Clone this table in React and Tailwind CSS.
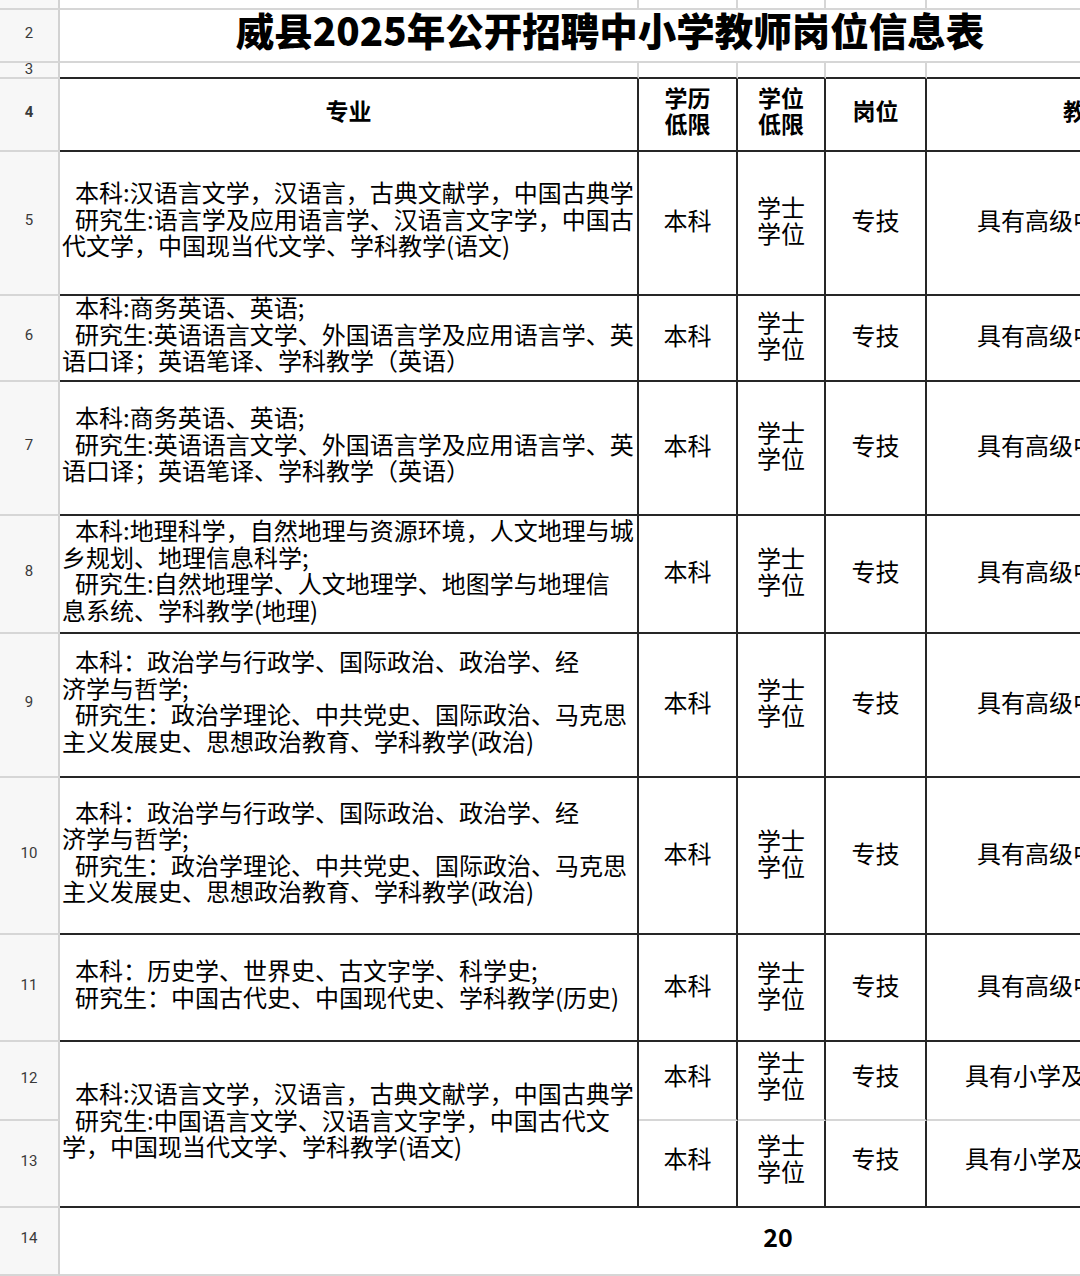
const BLACK_B = "border-b-2 border-b-[#262626]";
const GRAY_B = "border-b-2 border-b-[#d6d6d6]";

const HighTeach = "具有高级中学教师资格证";
const PrimaryTeach = "具有小学及以上教师资格证";

const rows = [
  {
    n: 5,
    h: "h-[144px]",
    lines: [
      ["本科:汉语言文学，汉语言，古典文献学，中国古典学；", true],
      ["研究生:语言学及应用语言学、汉语言文字学，中国古", true],
      ["代文学，中国现当代文学、学科教学(语文)", false],
    ],
  },
  {
    n: 6,
    h: "h-[86px]",
    lines: [
      ["本科:商务英语、英语;", true],
      ["研究生:英语语言文学、外国语言学及应用语言学、英", true],
      ["语口译；英语笔译、学科教学（英语）", false],
    ],
  },
  {
    n: 7,
    h: "h-[134px]",
    lines: [
      ["本科:商务英语、英语;", true],
      ["研究生:英语语言文学、外国语言学及应用语言学、英", true],
      ["语口译；英语笔译、学科教学（英语）", false],
    ],
  },
  {
    n: 8,
    h: "h-[118px]",
    lines: [
      ["本科:地理科学，自然地理与资源环境，人文地理与城", true],
      ["乡规划、地理信息科学;", false],
      ["研究生:自然地理学、人文地理学、地图学与地理信", true],
      ["息系统、学科教学(地理)", false],
    ],
  },
  {
    n: 9,
    h: "h-[144px]",
    lines: [
      ["本科：政治学与行政学、国际政治、政治学、经", true],
      ["济学与哲学;", false],
      ["研究生：政治学理论、中共党史、国际政治、马克思", true],
      ["主义发展史、思想政治教育、学科教学(政治)", false],
    ],
  },
  {
    n: 10,
    h: "h-[157px]",
    lines: [
      ["本科：政治学与行政学、国际政治、政治学、经", true],
      ["济学与哲学;", false],
      ["研究生：政治学理论、中共党史、国际政治、马克思", true],
      ["主义发展史、思想政治教育、学科教学(政治)", false],
    ],
  },
  {
    n: 11,
    h: "h-[107px]",
    lines: [
      ["本科：历史学、世界史、古文字学、科学史;", true],
      ["研究生：中国古代史、中国现代史、学科教学(历史)", true],
    ],
  },
];

const mergedLines = [
  ["本科:汉语言文学，汉语言，古典文献学，中国古典学；", true],
  ["研究生:中国语言文学、汉语言文字学，中国古代文", true],
  ["学，中国现当代文学、学科教学(语文)", false],
];

function RowHead({ n, bottom = GRAY_B }) {
  return (
    <div
      className={`w-[60px] shrink-0 bg-[#f7f7f7] border-r-2 border-r-[#d2d2d2] ${bottom} flex items-center justify-center pb-[5px] text-[15px] text-[#3a3a3a] font-['Roboto',sans-serif]`}
    >
      {n}
    </div>
  );
}

function Major({ lines, bottom = BLACK_B }) {
  return (
    <div
      className={`w-[579px] shrink-0 border-r-2 border-r-[#262626] ${bottom} flex flex-col justify-center overflow-hidden pb-[8px] text-[24px] leading-[26.5px]`}
    >
      {lines.map(([text, indent], i) => (
        <div
          key={i}
          className={`whitespace-nowrap ${indent ? "pl-[15px]" : "pl-[2px]"}`}
        >
          {text}
        </div>
      ))}
    </div>
  );
}

function Tail({ teach, bottom = BLACK_B, shift = "pb-[6px]" }) {
  return (
    <>
      <div
        className={`w-[99px] shrink-0 border-r-2 border-r-[#262626] ${bottom} flex items-center justify-center ${shift}`}
      >
        本科
      </div>
      <div
        className={`w-[88px] shrink-0 border-r-2 border-r-[#262626] ${bottom} flex flex-col items-center justify-center ${shift} leading-[26px]`}
      >
        <span>学士</span>
        <span>学位</span>
      </div>
      <div
        className={`w-[101px] shrink-0 border-r-2 border-r-[#262626] ${bottom} flex items-center justify-center ${shift}`}
      >
        专技
      </div>
      <div
        className={`w-[366px] shrink-0 border-r-2 border-r-[#262626] ${bottom} flex items-center justify-center ${shift} whitespace-nowrap`}
      >
        {teach}
      </div>
    </>
  );
}

export default function App() {
  return (
    <div className="w-[1080px] h-[1276px] overflow-hidden bg-white text-black text-[24px] font-['Noto_Sans_CJK_SC','Noto_Sans',sans-serif]">
      <div className="w-[1300px] flex flex-col">
        {/* row 1 (scrolled, partly visible) */}
        <div className="flex h-[10px]">
          <RowHead n="" />
          <div className={`w-[579px] shrink-0 border-r-2 border-r-[#d6d6d6] ${GRAY_B}`} />
          <div className={`w-[99px] shrink-0 border-r-2 border-r-[#d6d6d6] ${GRAY_B}`} />
          <div className={`w-[88px] shrink-0 border-r-2 border-r-[#d6d6d6] ${GRAY_B}`} />
          <div className={`w-[101px] shrink-0 border-r-2 border-r-[#d6d6d6] ${GRAY_B}`} />
          <div className={`w-[366px] shrink-0 ${GRAY_B}`} />
        </div>

        {/* row 2: title */}
        <div className="flex h-[53px]">
          <RowHead n="2" />
          <div
            className={`w-[1100px] shrink-0 ${GRAY_B} flex items-center justify-center pb-[12px] text-[38.5px] font-black whitespace-nowrap`}
          >
            威县2025年公开招聘中小学教师岗位信息表
          </div>
        </div>

        {/* row 3 */}
        <div className="flex h-[16px]">
          <div
            className={`w-[60px] shrink-0 bg-[#f7f7f7] border-r-2 border-r-[#d2d2d2] ${GRAY_B} flex items-start justify-center text-[15px] leading-[12px] text-[#3a3a3a] font-['Roboto',sans-serif]`}
          >
            3
          </div>
          <div className={`w-[579px] shrink-0 border-r-2 border-r-[#d6d6d6] ${BLACK_B}`} />
          <div className={`w-[99px] shrink-0 border-r-2 border-r-[#d6d6d6] ${BLACK_B}`} />
          <div className={`w-[88px] shrink-0 border-r-2 border-r-[#d6d6d6] ${BLACK_B}`} />
          <div className={`w-[101px] shrink-0 border-r-2 border-r-[#d6d6d6] ${BLACK_B}`} />
          <div className={`w-[366px] shrink-0 ${BLACK_B}`} />
        </div>

        {/* row 4: header */}
        <div className="flex h-[73px] font-bold text-[23px]">
          <RowHead n="4" />
          <div
            className={`w-[579px] shrink-0 border-r-2 border-r-[#262626] ${BLACK_B} flex items-center justify-center pb-[9px]`}
          >
            专业
          </div>
          <div
            className={`w-[99px] shrink-0 border-r-2 border-r-[#262626] ${BLACK_B} flex flex-col items-center justify-center pb-[9px] leading-[26px]`}
          >
            <span>学历</span>
            <span>低限</span>
          </div>
          <div
            className={`w-[88px] shrink-0 border-r-2 border-r-[#262626] ${BLACK_B} flex flex-col items-center justify-center pb-[9px] leading-[26px]`}
          >
            <span>学位</span>
            <span>低限</span>
          </div>
          <div
            className={`w-[101px] shrink-0 border-r-2 border-r-[#262626] ${BLACK_B} flex items-center justify-center pb-[9px]`}
          >
            岗位
          </div>
          <div
            className={`w-[366px] shrink-0 border-r-2 border-r-[#262626] ${BLACK_B} flex items-center justify-center pb-[9px]`}
          >
            教师资格
          </div>
        </div>

        {/* rows 5-11 */}
        {rows.map((r) => (
          <div key={r.n} className={`flex ${r.h}`}>
            <RowHead n={r.n} />
            <Major lines={r.lines} />
            <Tail teach={HighTeach} />
          </div>
        ))}

        {/* rows 12-13 with merged major cell */}
        <div className="flex h-[166px]">
          <div className="w-[60px] shrink-0 flex flex-col">
            <div className="h-[79px] flex">
              <RowHead n="12" />
            </div>
            <div className="h-[87px] flex">
              <RowHead n="13" />
            </div>
          </div>
          <Major lines={mergedLines} />
          <div className="flex flex-col">
            <div className="flex h-[79px]">
              <Tail teach={PrimaryTeach} bottom={GRAY_B} shift="pb-[12px]" />
            </div>
            <div className="flex h-[87px]">
              <Tail teach={PrimaryTeach} shift="pb-[12px]" />
            </div>
          </div>
        </div>

        {/* row 14: total */}
        <div className="flex h-[68px]">
          <RowHead n="14" />
          <div className={`w-[579px] shrink-0 ${GRAY_B}`} />
          <div className={`w-[99px] shrink-0 ${GRAY_B}`} />
          <div
            className={`w-[88px] shrink-0 ${GRAY_B} flex items-center justify-center pb-[9px] pr-[8px] font-bold text-[25px]`}
          >
            20
          </div>
          <div className={`w-[101px] shrink-0 ${GRAY_B}`} />
          <div className={`w-[366px] shrink-0 ${GRAY_B}`} />
        </div>
      </div>
    </div>
  );
}
